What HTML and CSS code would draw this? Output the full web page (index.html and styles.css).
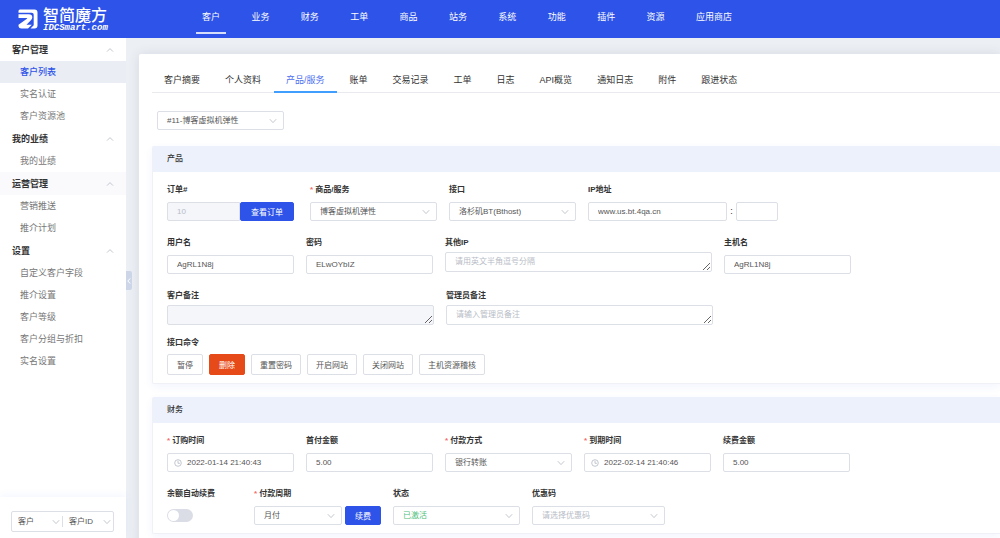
FILE: index.html
```html
<!DOCTYPE html>
<html lang="zh-CN">
<head>
  <meta charset="UTF-8">
  <title>智简魔方</title>
  <link rel="stylesheet" href="styles.css">
</head>
<body>
  <svg class="sprite" aria-hidden="true">
    <symbol id="down" viewBox="0 0 8 8"><path d="M.8 2.2 4 5.6l3.200-3.400"/></symbol>
    <symbol id="up" viewBox="0 0 8 8"><path d="M1 5.600 4 2.600l3 3"/></symbol>
    <symbol id="left" viewBox="0 0 8 8"><path d="M5.200 1.500 2.800 4l2.400 2.500"/></symbol>
    <symbol id="clock" viewBox="0 0 8 8"><circle cx="4" cy="4" r="3.300"/><path d="M4 1.800v2.500h1.900"/></symbol>
  </svg>

  <header class="header">
    <a class="logo" href="#">
      <svg class="logo-icon" viewBox="0 0 20 20" aria-hidden="true">
        <path d="M.5 3.800V2Q.5.500 2 .5h14.500q3 0 3 3v13q0 3-3 3h-4l3.200-3.200V5.800q0-2-2-2z"/>
        <path d="M.5 5.300h10.200q3.600 0 3.600 3 0 1.600-1.200 2.800l-4.600 4.600h5.300l-3.800 3.800H3.500q-3 0-3-3v-.7l8.400-6q1-.9-.4-.9h-8z"/>
      </svg>
      <span class="logo-text">
        <span class="logo-name">智简魔方</span>
        <span class="logo-site">IDCSmart.com</span>
      </span>
    </a>
    <nav class="top-nav">
      <a class="active" href="#">客户</a>
      <a href="#">业务</a>
      <a href="#">财务</a>
      <a href="#">工单</a>
      <a href="#">商品</a>
      <a href="#">站务</a>
      <a href="#">系统</a>
      <a href="#">功能</a>
      <a href="#">插件</a>
      <a href="#">资源</a>
      <a href="#">应用商店</a>
    </nav>
  </header>

  <div class="layout">
    <aside class="sidebar">
      <nav class="menu">
        <button class="menu-title">客户管理<svg class="icon"><use href="#up"/></svg></button>
        <a class="active" href="#">客户列表</a>
        <a href="#">实名认证</a>
        <a href="#">客户资源池</a>
        <button class="menu-title">我的业绩<svg class="icon"><use href="#up"/></svg></button>
        <a href="#">我的业绩</a>
        <button class="menu-title hover">运营管理<svg class="icon"><use href="#up"/></svg></button>
        <a href="#">营销推送</a>
        <a href="#">推介计划</a>
        <button class="menu-title">设置<svg class="icon"><use href="#up"/></svg></button>
        <a href="#">自定义客户字段</a>
        <a href="#">推介设置</a>
        <a href="#">客户等级</a>
        <a href="#">客户分组与折扣</a>
        <a href="#">实名设置</a>
      </nav>
      <div class="side-search">
        <div class="search-box">
          <div class="select">
            <select aria-label="搜索类型"><option>客户</option></select>
            <svg class="icon"><use href="#down"/></svg>
          </div>
          <div class="select">
            <select aria-label="搜索字段"><option>客户ID</option></select>
            <svg class="icon"><use href="#down"/></svg>
          </div>
        </div>
      </div>
    </aside>
    <button class="collapse" aria-label="收起菜单"><svg class="icon"><use href="#left"/></svg></button>

    <main class="main">
      <div class="card">
        <nav class="tabs">
          <a href="#">客户摘要</a>
          <a href="#">个人资料</a>
          <a class="active" href="#">产品/服务</a>
          <a href="#">账单</a>
          <a href="#">交易记录</a>
          <a href="#">工单</a>
          <a href="#">日志</a>
          <a href="#">API概览</a>
          <a href="#">通知日志</a>
          <a href="#">附件</a>
          <a href="#">跟进状态</a>
        </nav>

        <div class="select host-select">
          <select aria-label="选择产品"><option>#11-博客虚拟机弹性</option></select>
          <svg class="icon"><use href="#down"/></svg>
        </div>

        <section class="panel">
          <h2 class="panel-title">产品</h2>
          <div class="panel-body">
            <div class="row">
              <div class="field order">
                <label for="order">订单#</label>
                <div class="group">
                  <input id="order" type="text" value="10" disabled>
                  <button class="btn primary">查看订单</button>
                </div>
              </div>
              <div class="field">
                <label class="required" for="product">商品/服务</label>
                <div class="select">
                  <select id="product"><option>博客虚拟机弹性</option></select>
                  <svg class="icon"><use href="#down"/></svg>
                </div>
              </div>
              <div class="field">
                <label for="server">接口</label>
                <div class="select">
                  <select id="server"><option>洛杉矶BT(Bthost)</option></select>
                  <svg class="icon"><use href="#down"/></svg>
                </div>
              </div>
              <div class="field ip">
                <label for="ip">IP地址</label>
                <div class="group">
                  <input id="ip" type="text" value="www.us.bt.4qa.cn">
                  <span class="colon">:</span>
                  <input class="port" type="text" aria-label="端口">
                </div>
              </div>
            </div>
            <div class="row">
              <div class="field">
                <label for="username">用户名</label>
                <input id="username" type="text" value="AgRL1N8j">
              </div>
              <div class="field">
                <label for="password">密码</label>
                <input id="password" type="text" value="ELwOYbIZ">
              </div>
              <div class="field wide">
                <label for="other-ip">其他IP</label>
                <textarea id="other-ip" placeholder="请用英文半角逗号分隔"></textarea>
              </div>
              <div class="field">
                <label for="hostname">主机名</label>
                <input id="hostname" type="text" value="AgRL1N8j">
              </div>
            </div>
            <div class="row notes">
              <div class="field wide">
                <label for="client-note">客户备注</label>
                <textarea id="client-note" disabled></textarea>
              </div>
              <div class="field wide">
                <label for="admin-note">管理员备注</label>
                <textarea id="admin-note" placeholder="请输入管理员备注"></textarea>
              </div>
            </div>
            <div class="commands">
              <h3>接口命令</h3>
              <div class="buttons">
                <button class="btn">暂停</button>
                <button class="btn danger">删除</button>
                <button class="btn">重置密码</button>
                <button class="btn">开启网站</button>
                <button class="btn">关闭网站</button>
                <button class="btn">主机资源稽核</button>
              </div>
            </div>
          </div>
        </section>

        <section class="panel">
          <h2 class="panel-title">财务</h2>
          <div class="panel-body">
            <div class="row">
              <div class="field">
                <label class="required" for="order-time">订购时间</label>
                <div class="date">
                  <input id="order-time" type="text" value="2022-01-14 21:40:43">
                  <svg class="icon"><use href="#clock"/></svg>
                </div>
              </div>
              <div class="field">
                <label for="first-amount">首付金额</label>
                <input id="first-amount" type="text" value="5.00">
              </div>
              <div class="field">
                <label class="required" for="payment">付款方式</label>
                <div class="select">
                  <select id="payment"><option>银行转账</option></select>
                  <svg class="icon"><use href="#down"/></svg>
                </div>
              </div>
              <div class="field">
                <label class="required" for="due-time">到期时间</label>
                <div class="date">
                  <input id="due-time" type="text" value="2022-02-14 21:40:46">
                  <svg class="icon"><use href="#clock"/></svg>
                </div>
              </div>
              <div class="field">
                <label for="renew-amount">续费金额</label>
                <input id="renew-amount" type="text" value="5.00">
              </div>
            </div>
            <div class="row">
              <div class="field auto-renew">
                <label for="auto-renew">余额自动续费</label>
                <input id="auto-renew" class="switch" type="checkbox">
              </div>
              <div class="field">
                <label class="required" for="cycle">付款周期</label>
                <div class="group cycle">
                  <div class="select">
                    <select id="cycle"><option>月付</option></select>
                    <svg class="icon"><use href="#down"/></svg>
                  </div>
                  <button class="btn primary">续费</button>
                </div>
              </div>
              <div class="field">
                <label for="status">状态</label>
                <div class="select">
                  <select id="status" class="success"><option>已激活</option></select>
                  <svg class="icon"><use href="#down"/></svg>
                </div>
              </div>
              <div class="field promo">
                <label for="promo">优惠码</label>
                <div class="select">
                  <select id="promo" class="empty"><option>请选择优惠码</option></select>
                  <svg class="icon"><use href="#down"/></svg>
                </div>
              </div>
            </div>
          </div>
        </section>
      </div>
    </main>
  </div>
</body>
</html>
```

FILE: styles.css
```css
* {
  box-sizing: border-box;
}
body {
  margin: 0;
  height: 100vh;
  display: flex;
  flex-direction: column;
  background: #eceff4;
  color: #333;
  font-family: "Liberation Sans", "Noto Sans CJK SC", sans-serif;
  font-size: 9px;
  overflow: hidden;
}
a {
  color: inherit;
  text-decoration: none;
}
button,
input,
select,
textarea {
  font-family: inherit;
  font-size: 8px;
  color: #555;
  margin: 0;
}
button {
  cursor: pointer;
}
.sprite {
  display: none;
}
.icon {
  width: 8px;
  height: 8px;
  fill: none;
  stroke: #b4b9c2;
  stroke-width: .8;
}

/* Header */
.header {
  display: flex;
  flex: none;
  height: 38px;
  background: #2d53e8;
  color: #fff;
}
.logo {
  display: flex;
  align-items: center;
  gap: 5px;
  width: 196px;
  padding-left: 18px;
}
.logo-icon {
  width: 20px;
  height: 20px;
  fill: #fff;
}
.logo-text {
  display: flex;
  flex-direction: column;
  padding-top: 1px;
}
.logo-name {
  font-size: 16px;
  line-height: 16px;
  font-weight: 500;
}
.logo-site {
  font: italic bold 9px/8px "Liberation Mono", monospace;
}
.top-nav {
  display: flex;
  justify-content: space-between;
  flex: 0 1 542px;
}
.top-nav a {
  height: 34px;
  padding: 0 6px;
  line-height: 34px;
  border-bottom: 2px solid transparent;
}
.top-nav a.active {
  border-bottom-color: #d5ddfa;
}

/* Sidebar */
.layout {
  position: relative;
  display: flex;
  flex: 1;
  min-height: 0;
}
.sidebar {
  display: flex;
  flex-direction: column;
  flex: none;
  width: 126px;
  background: #fff;
}
.menu {
  display: flex;
  flex-direction: column;
  flex: 1;
}
.menu a {
  height: 22px;
  padding-left: 20px;
  line-height: 22px;
  color: #777;
}
.menu a.active {
  background: #eaedf3;
  color: #2d53e8;
  font-weight: 500;
}
.menu-title {
  display: flex;
  align-items: center;
  justify-content: space-between;
  height: 23px;
  padding: 0 12px;
  border: none;
  background: none;
  color: #333;
  font-size: 9px;
  font-weight: bold;
}
.menu-title.hover {
  background: #fafafc;
}
.side-search {
  padding: 14px 12px 6px 11px;
  box-shadow: 0 -2px 8px rgba(45, 83, 232, .05);
}
.search-box {
  display: flex;
  align-items: center;
  height: 21px;
  border: 1px solid #dcdfe6;
  border-radius: 2px;
}
.search-box .select {
  flex: 1;
}
.search-box .select + .select {
  border-left: 1px solid #dcdfe6;
}
.search-box select {
  height: 11px;
  padding: 0 6px;
  border: none;
  background: none;
}
.search-box .select .icon {
  margin-right: 2px;
}
.collapse {
  position: absolute;
  left: 126px;
  top: 233px;
  display: flex;
  align-items: center;
  justify-content: center;
  width: 6px;
  height: 19px;
  padding: 0;
  border: none;
  border-radius: 0 2px 2px 0;
  background: #cdd6e8;
}
.collapse .icon {
  flex: none;
  stroke: #fff;
  stroke-width: 1;
}

/* Content */
.main {
  flex: 1;
  min-width: 0;
  padding: 16px 0 0 13px;
  overflow: auto;
  scrollbar-width: none;
}
.card {
  min-height: 100%;
  padding: 14px 0 14px 13px;
  background: #fff;
  border-radius: 2px 0 0 0;
  box-shadow: 0 0 12px rgba(60, 70, 90, .12);
}
.tabs {
  display: flex;
  gap: 1px;
  border-bottom: 1px solid #e8eaee;
}
.tabs a {
  height: 25px;
  margin-bottom: -1px;
  padding: 0 12px;
  line-height: 24px;
  white-space: nowrap;
}
.tabs a.active {
  color: #4d6ff0;
  border-bottom: 2px solid #409eff;
}
.host-select {
  width: 127px;
  margin: 18px 0 16px 5px;
}
.panel {
  margin-bottom: 13px;
  border-left: 1px solid #eff1f7;
  border-bottom: 1px solid #eff1f7;
  border-radius: 2px 0 0 2px;
  box-shadow: 0 3px 8px rgba(45, 83, 232, .06);
}
.panel-title {
  margin: 0;
  padding-left: 14px;
  background: #edf1fc;
  font-size: 8px;
  line-height: 26px;
  font-weight: 500;
}
.panel-body {
  padding: 10px 14px 8px;
}
.row {
  display: flex;
  gap: 12px;
  margin-bottom: 14px;
}
.row.notes {
  margin-bottom: 10px;
}
.row:last-child {
  margin-bottom: 0;
}
.field {
  flex: none;
  width: 127px;
}
.field.wide {
  width: 267px;
}
.field.order {
  width: 131px;
  padding-right: 4px;
}
.field.ip {
  width: 190px;
}
.field.auto-renew {
  width: 75px;
}
.field.promo {
  width: 133px;
}
.field label {
  display: block;
  margin-bottom: 4px;
  font-size: 8px;
  line-height: 16px;
  font-weight: bold;
}
.field.wide label {
  margin-bottom: 1px;
}
.required::before {
  content: "* ";
  color: #f56c6c;
}
input,
select,
textarea {
  display: block;
  width: 100%;
  height: 19px;
  padding: 0 9px;
  border: 1px solid #dcdfe6;
  border-radius: 2px;
  background: #fff;
}
textarea {
  height: 20px;
  min-height: 20px;
  padding: 3px 9px;
  line-height: 12px;
  resize: vertical;
  overflow: hidden;
}
input:disabled,
textarea:disabled {
  background: #f4f6fa;
  color: #b8bcc6;
}
::placeholder {
  color: #b8bcc6;
}
select {
  appearance: none;
}
select.success {
  color: #4fbf7c;
}
select.empty {
  color: #b8bcc6;
}
.select,
.date {
  display: grid;
  align-items: center;
}
.select > *,
.date > * {
  grid-area: 1 / 1;
}
.select .icon {
  justify-self: end;
  margin-right: 7px;
  pointer-events: none;
}
.date .icon {
  margin-left: 7px;
  pointer-events: none;
}
.date input {
  padding-left: 19px;
}
.group {
  display: flex;
}
.order input {
  flex: 1;
  min-width: 0;
  border-radius: 2px 0 0 2px;
}
.ip input {
  width: 139px;
}
.ip .port {
  width: 42px;
}
.colon {
  width: 9px;
  text-align: center;
  line-height: 19px;
}
.cycle {
  gap: 3px;
}
.cycle .select {
  flex: 1;
}

.btn {
  flex: none;
  min-width: 36px;
  height: 21px;
  padding: 0 8px;
  border: 1px solid #dcdfe6;
  border-radius: 2px;
  background: #fff;
}
.btn.primary {
  height: 19px;
  border-color: #2d53e8;
  background: #2d53e8;
  color: #fff;
}
.order .btn {
  width: 54px;
}
.btn.danger {
  border-color: #e64a19;
  background: #e64a19;
  color: #fff;
}
.commands h3 {
  margin: 0 0 3px;
  font-size: 8px;
  line-height: 16px;
}
.buttons {
  display: flex;
  gap: 6px;
}

.switch {
  appearance: none;
  width: 26px;
  height: 13px;
  margin-top: 7px;
  padding: 1px;
  border: none;
  border-radius: 7px;
  background: #dadde6;
  cursor: pointer;
}
.switch::before {
  content: "";
  display: block;
  width: 11px;
  height: 11px;
  border-radius: 50%;
  background: #fff;
}
.switch:checked {
  background: #2d53e8;
}
.switch:checked::before {
  margin-left: 13px;
}
```
